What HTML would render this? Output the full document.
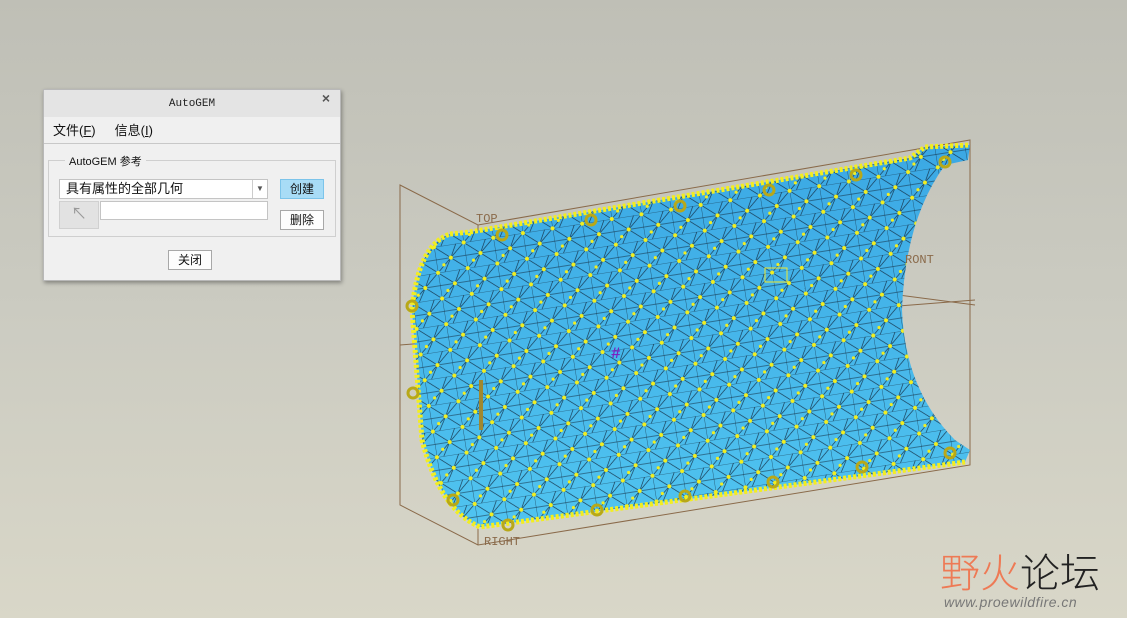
<!DOCTYPE html>
<html><head><meta charset="utf-8"><style>
body{margin:0;width:1127px;height:618px;overflow:hidden;background:linear-gradient(#bfbfb6 0%,#cbcbc1 50%,#d9d7c8 100%);font-family:"Liberation Sans","Noto Sans CJK SC",sans-serif;position:relative}
.dlg{position:absolute;left:43px;top:89px;width:296px;height:190px;background:#f0f0f0;border:1px solid #b8b8b8;box-shadow:1px 2px 4px rgba(0,0,0,.35)}
.tb{height:27px;background:#e4e4e4;text-align:center;font:11px "Liberation Mono",monospace;line-height:28px;color:#222;position:relative}
.x{position:absolute;right:10px;top:0;font:bold 14px "Liberation Sans",sans-serif;color:#555}
.menu{height:26px;border-bottom:1px solid #c8c8c8;font-size:13px;line-height:27px;color:#111}
.menu span{margin-left:9px;margin-right:10px}
.grp{position:absolute;left:4px;top:70px;width:286px;height:75px;border:1px solid #cfcfcf}
.gl{position:absolute;left:16px;top:-8px;background:#f0f0f0;padding:0 4px;font-size:11px;color:#111}
.inp{position:absolute;background:#fff;border:1px solid #c4c4c4;font-size:13px;color:#111}
.btn{position:absolute;border:1px solid #a8a8a8;background:#fdfdfd;font-size:12px;text-align:center;color:#111}
</style></head><body>
<svg width="1127" height="618" style="position:absolute;left:0;top:0">
<defs>
<pattern id="m" width="30" height="26" patternUnits="userSpaceOnUse" patternTransform="rotate(-9)">
<path d="M0 0H30M0 13H30M0 0L15 13L30 0M0 26L15 13L30 26M0 0V26M15 13L7 26M15 13L22 0" stroke="#10253a" stroke-width=".6" fill="none"/>
<circle cx="0" cy="0" r="2" fill="#f2ee20"/><circle cx="30" cy="0" r="2" fill="#f2ee20"/><circle cx="0" cy="26" r="2" fill="#f2ee20"/><circle cx="30" cy="26" r="2" fill="#f2ee20"/><circle cx="15" cy="13" r="2" fill="#f2ee20"/><circle cx="7" cy="19" r="1.6" fill="#f2ee20"/>
</pattern>
<linearGradient id="bl" x1="0" y1="0" x2="0" y2="1"><stop offset="0" stop-color="#3ba8e4"/><stop offset="1" stop-color="#50c4f0"/></linearGradient>
</defs>
<g stroke="#8a6a4a" stroke-width="1" fill="none">
<path d="M400 185L478 225L970 140L970 465L478 545L400 505Z"/>
<path d="M478 225V545M400 345L975 300M478 240L975 305"/>
</g>
<path d="M470 232L910 158L925 147L970 145L968 160L945 165Q905 220 902 310Q905 390 955 440L970 450L965 462L480 527Q440 510 422 440L412 310Q418 245 450 234Z" fill="url(#bl)"/>
<path d="M470 232L910 158L925 147L970 145L968 160L945 165Q905 220 902 310Q905 390 955 440L970 450L965 462L480 527Q440 510 422 440L412 310Q418 245 450 234Z" fill="url(#m)"/>
<path d="M450 234L470 232L910 158L925 147L970 145M412 310Q418 245 450 234M412 310L422 440Q440 510 480 527L965 462" stroke="#f2ee20" stroke-width="5" fill="none" stroke-dasharray="3 2"/>
<g fill="none" stroke="#b8a818" stroke-width="3">
<circle cx="945" cy="162" r="5"/><circle cx="856" cy="175" r="5"/><circle cx="769" cy="190" r="5"/><circle cx="680" cy="206" r="5"/><circle cx="591" cy="220" r="5"/><circle cx="502" cy="235" r="5"/><circle cx="412" cy="306" r="5"/><circle cx="413" cy="393" r="5"/><circle cx="453" cy="500" r="5"/><circle cx="508" cy="525" r="5"/><circle cx="597" cy="510" r="5"/><circle cx="685" cy="496" r="5"/><circle cx="773" cy="482" r="5"/><circle cx="862" cy="467" r="5"/><circle cx="950" cy="453" r="5"/>
</g>
<path d="M481 380V430" stroke="#a08830" stroke-width="4"/>
<g fill="#7a22c0" font-size="16" font-weight="bold" font-family="Liberation Mono"><text x="611" y="358">#</text></g>
<rect x="765" y="268" width="22" height="14" fill="none" stroke="#eee830"/>
<g fill="#8a6a4a" font-family="Liberation Mono" font-size="12"><text x="476" y="222">TOP</text><text x="905" y="263">RONT</text><text x="484" y="545">RIGHT</text></g>
</svg>
<div class="dlg">
<div class="tb">AutoGEM<span class="x">×</span></div>
<div class="menu"><span>文件(<u>F</u>)</span><span>信息(<u>I</u>)</span></div>
<div class="grp"><div class="gl">AutoGEM 参考</div></div>
<div class="inp" style="left:15px;top:89px;width:201px;height:18px;line-height:18px;padding-left:6px">具有属性的全部几何<span style="position:absolute;right:0;top:0;width:14px;height:18px;border-left:1px solid #ccc;font-size:8px;text-align:center;color:#555">▼</span></div>
<div style="position:absolute;left:15px;top:111px;width:38px;height:26px;background:#e2e2e2;border:1px solid #d0d0d0;color:#999;text-align:center;font-size:16px;line-height:26px">↖</div>
<div class="inp" style="left:56px;top:111px;width:166px;height:17px"></div>
<div class="btn" style="left:236px;top:89px;width:42px;height:18px;line-height:18px;background:#a8dcf6;border-color:#7cc4ea">创建</div>
<div class="btn" style="left:236px;top:120px;width:42px;height:18px;line-height:18px">删除</div>
<div class="btn" style="left:124px;top:160px;width:42px;height:18px;line-height:18px">关闭</div>
</div>
<div style="position:absolute;left:940px;top:548px;font-size:40px;line-height:44px;color:#ee7a55;font-family:'Noto Sans CJK SC',sans-serif;font-weight:300">野火<span style="color:#222">论坛</span></div>
<div style="position:absolute;left:944px;top:594px;font-size:14px;font-style:italic;color:#777;letter-spacing:.5px">www.proewildfire.cn</div>
</body></html>
